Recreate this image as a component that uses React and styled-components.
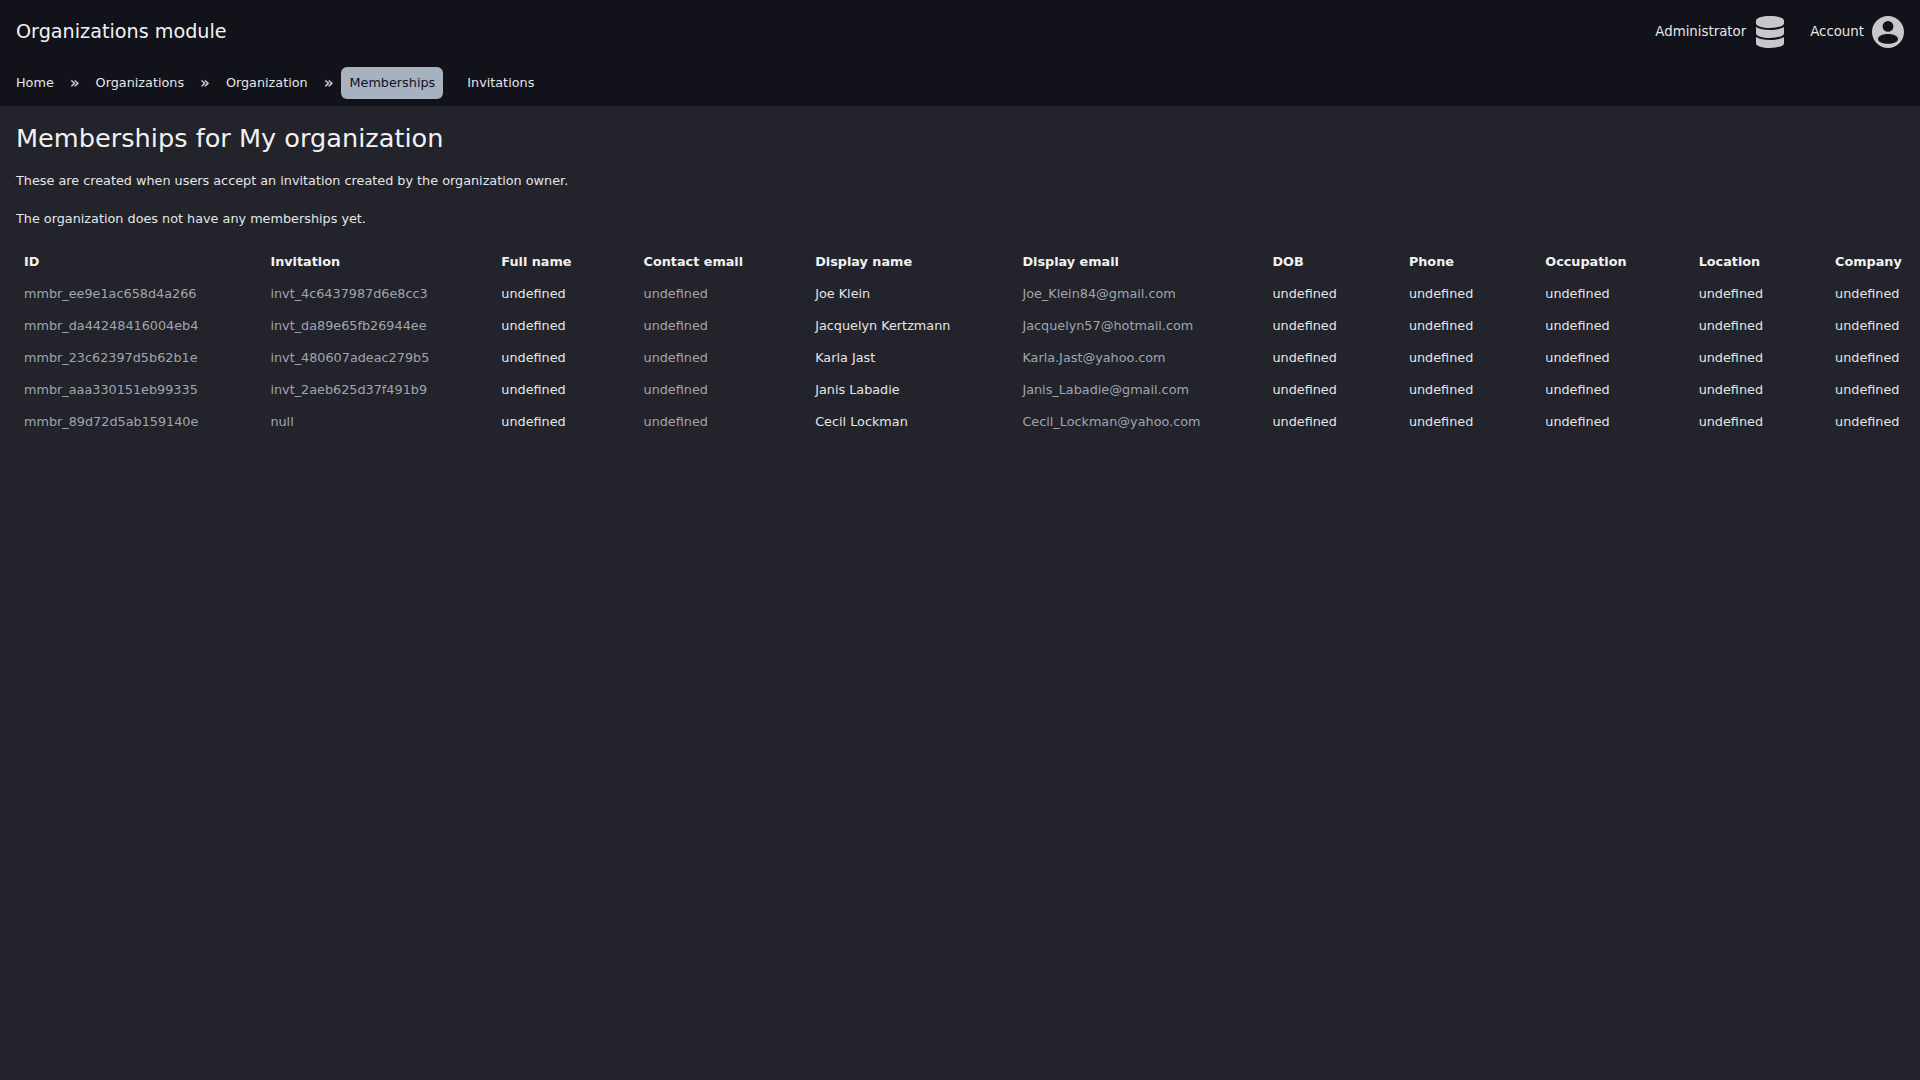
import React from 'react';
import styled, { createGlobalStyle } from 'styled-components';
import { FaDatabase } from 'react-icons/fa';

const GlobalStyle = createGlobalStyle`
    html, body {
        margin: 0;
        height: 100%;
        background-color: #22232b;
    }
    body {
        font-family: "DejaVu Sans", sans-serif;
        font-size: 12.8px;
        color: #e6e6e6;
    }
`;

const crumbs = ['Home', 'Organizations', 'Organization'];

const columns = ['ID', 'Invitation', 'Full name', 'Contact email', 'Display name', 'Display email', 'DOB', 'Phone', 'Occupation', 'Location', 'Company'];

const memberships = [
    { id: 'mmbr_ee9e1ac658d4a266', invitation: 'invt_4c6437987d6e8cc3', name: 'Joe Klein', email: 'Joe_Klein84@gmail.com' },
    { id: 'mmbr_da44248416004eb4', invitation: 'invt_da89e65fb26944ee', name: 'Jacquelyn Kertzmann', email: 'Jacquelyn57@hotmail.com' },
    { id: 'mmbr_23c62397d5b62b1e', invitation: 'invt_480607adeac279b5', name: 'Karla Jast', email: 'Karla.Jast@yahoo.com' },
    { id: 'mmbr_aaa330151eb99335', invitation: 'invt_2aeb625d37f491b9', name: 'Janis Labadie', email: 'Janis_Labadie@gmail.com' },
    { id: 'mmbr_89d72d5ab159140e', invitation: 'null', name: 'Cecil Lockman', email: 'Cecil_Lockman@yahoo.com' },
];

const AccountIcon = () => (
    <svg width="32" height="32" viewBox="0 0 32 32" fill="currentColor" fillRule="evenodd">
        <path d="M16 0a16 16 0 1 0 0 32a16 16 0 1 0 0-32z
                 M16 5a5.4 5.4 0 1 0 0 10.8a5.4 5.4 0 1 0 0-10.8z
                 M16 18c-5.8 0-10 2.2-10 4.9s4.2 4.9 10 4.9s10-2.2 10-4.9s-4.2-4.9-10-4.9z" />
    </svg>
);

const App = () => {
    return (
        <>
            <GlobalStyle />
            <Header>
                <TopRow>
                    <Brand>Organizations module</Brand>
                    <UserMenu>
                        <MenuItem><MenuLabel>Administrator</MenuLabel> <FaDatabase size={32} /></MenuItem>
                        <MenuItem><MenuLabel>Account</MenuLabel> <AccountIcon /></MenuItem>
                    </UserMenu>
                </TopRow>
                <Nav>
                    {crumbs.map((crumb) => (
                        <React.Fragment key={crumb}>
                            <NavLink>{crumb}</NavLink>
                            <Separator>»</Separator>
                        </React.Fragment>
                    ))}
                    <NavLink $active>Memberships</NavLink>
                    <NavLink $spaced>Invitations</NavLink>
                </Nav>
            </Header>
            <Main>
                <Title>Memberships for My organization</Title>
                <Text>These are created when users accept an invitation created by the organization owner.</Text>
                <Text>The organization does not have any memberships yet.</Text>
                <Table>
                    <thead>
                        <tr>
                            {columns.map((col) => <Th key={col}>{col}</Th>)}
                        </tr>
                    </thead>
                    <tbody>
                        {memberships.map((m) => (
                            <tr key={m.id}>
                                <Td $muted>{m.id}</Td>
                                <Td $muted>{m.invitation}</Td>
                                <Td>undefined</Td>
                                <Td $muted>undefined</Td>
                                <Td>{m.name}</Td>
                                <Td $muted>{m.email}</Td>
                                <Td>undefined</Td>
                                <Td>undefined</Td>
                                <Td>undefined</Td>
                                <Td>undefined</Td>
                                <Td>undefined</Td>
                            </tr>
                        ))}
                    </tbody>
                </Table>
            </Main>
        </>
    );
};

export default App;

const Header = styled.header`
    height: 106px;
    padding: 0 16px;
    box-sizing: border-box;
    background-color: #11121a;
`;

const TopRow = styled.div`
    display: flex;
    justify-content: space-between;
    align-items: center;
    height: 64px;
`;

const Brand = styled.div`
    font-size: 19.2px;
    line-height: 24px;
    color: #f2f2f2;
`;

const UserMenu = styled.div`
    display: flex;
    gap: 24px;
`;

const MenuItem = styled.div`
    display: flex;
    align-items: center;
    gap: 8px;

    svg {
        color: #c8c8cc;
    }
`;

const MenuLabel = styled.span`
    margin-bottom: 2px;
    font-size: 13.33px;
    line-height: 15px;
    color: #e6e6e6;
`;

const Nav = styled.nav`
    display: flex;
    align-items: center;
    height: 32px;
    margin-top: 3px;
`;

const NavLink = styled.a`
    display: block;
    padding: 8px;
    margin-left: ${(p) => (p.$spaced ? '16px' : '0')};
    line-height: 16px;
    border-radius: 6px;
    color: ${(p) => (p.$active ? '#11121a' : '#e6e6e6')};
    background-color: ${(p) => (p.$active ? '#a6b2c0' : 'transparent')};

    &:first-child {
        padding-left: 0;
    }
`;

const Separator = styled.span`
    margin: 0 8px 2px;
    font-size: 16px;
    color: #e6e6e6;
`;

const Main = styled.main`
    padding: 16px;
`;

const Title = styled.h1`
    margin: 0 0 19px;
    font-size: 25.6px;
    font-weight: 400;
    line-height: 32px;
    color: #f2f2f2;
`;

const Text = styled.p`
    margin: 0 0 22px;
    line-height: 16px;
    color: #e6e6e6;

    &:last-of-type {
        margin-bottom: 19px;
    }
`;

const Table = styled.table`
    border-collapse: collapse;
`;

const Th = styled.th`
    padding: 8px 64px 8px 8px;
    line-height: 16px;
    font-weight: 700;
    text-align: left;
    white-space: nowrap;
    color: #f2f2f2;

    &:last-child {
        padding-right: 8px;
    }
`;

const Td = styled.td`
    padding: 8px 64px 8px 8px;
    line-height: 16px;
    white-space: nowrap;
    color: ${(p) => (p.$muted ? '#a0a6b0' : '#e6e6e6')};

    &:last-child {
        padding-right: 8px;
    }
`;
